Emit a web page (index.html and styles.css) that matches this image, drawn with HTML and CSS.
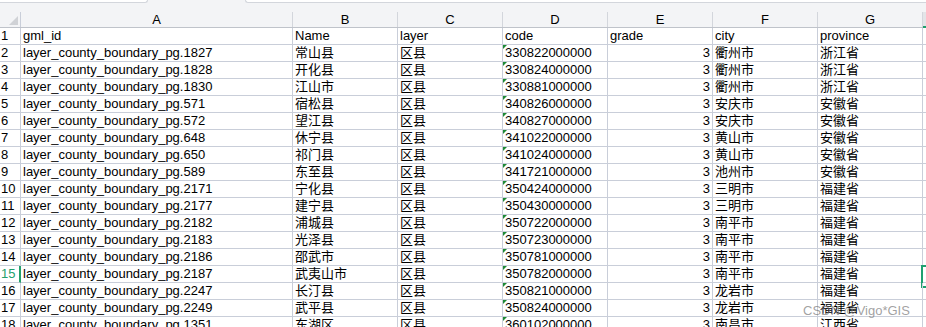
FILE: index.html
```html
<!DOCTYPE html>
<html lang="zh">
<head>
<meta charset="utf-8">
<title>Sheet</title>
<link rel="stylesheet" href="styles.css">
</head>
<body>
<div class="top">
  <div class="namebox"></div>
  <div class="gap"></div>
  <div class="formula"></div>
</div>
<div class="sheet">
  <div class="hc corner"><div class="lbl"><span class="tri-corner"></span></div></div>
  <div class="hc"><div class="lbl">A</div></div>
  <div class="hc"><div class="lbl">B</div></div>
  <div class="hc"><div class="lbl">C</div></div>
  <div class="hc"><div class="lbl">D</div></div>
  <div class="hc"><div class="lbl">E</div></div>
  <div class="hc"><div class="lbl">F</div></div>
  <div class="hc"><div class="lbl">G</div></div>
  <div class="hc hsel"><div class="lbl"></div></div>

  <div class="rh">1</div><div class="c">gml_id</div><div class="c">Name</div><div class="c">layer</div><div class="c">code</div><div class="c">grade</div><div class="c">city</div><div class="c">province</div><div class="c"></div>
  <div class="rh">2</div><div class="c">layer_county_boundary_pg.1827</div><div class="c">常山县</div><div class="c">区县</div><div class="c t">330822000000</div><div class="c n">3</div><div class="c">衢州市</div><div class="c">浙江省</div><div class="c"></div>
  <div class="rh">3</div><div class="c">layer_county_boundary_pg.1828</div><div class="c">开化县</div><div class="c">区县</div><div class="c t">330824000000</div><div class="c n">3</div><div class="c">衢州市</div><div class="c">浙江省</div><div class="c"></div>
  <div class="rh">4</div><div class="c">layer_county_boundary_pg.1830</div><div class="c">江山市</div><div class="c">区县</div><div class="c t">330881000000</div><div class="c n">3</div><div class="c">衢州市</div><div class="c">浙江省</div><div class="c"></div>
  <div class="rh">5</div><div class="c">layer_county_boundary_pg.571</div><div class="c">宿松县</div><div class="c">区县</div><div class="c t">340826000000</div><div class="c n">3</div><div class="c">安庆市</div><div class="c">安徽省</div><div class="c"></div>
  <div class="rh">6</div><div class="c">layer_county_boundary_pg.572</div><div class="c">望江县</div><div class="c">区县</div><div class="c t">340827000000</div><div class="c n">3</div><div class="c">安庆市</div><div class="c">安徽省</div><div class="c"></div>
  <div class="rh">7</div><div class="c">layer_county_boundary_pg.648</div><div class="c">休宁县</div><div class="c">区县</div><div class="c t">341022000000</div><div class="c n">3</div><div class="c">黄山市</div><div class="c">安徽省</div><div class="c"></div>
  <div class="rh">8</div><div class="c">layer_county_boundary_pg.650</div><div class="c">祁门县</div><div class="c">区县</div><div class="c t">341024000000</div><div class="c n">3</div><div class="c">黄山市</div><div class="c">安徽省</div><div class="c"></div>
  <div class="rh">9</div><div class="c">layer_county_boundary_pg.589</div><div class="c">东至县</div><div class="c">区县</div><div class="c t">341721000000</div><div class="c n">3</div><div class="c">池州市</div><div class="c">安徽省</div><div class="c"></div>
  <div class="rh">10</div><div class="c">layer_county_boundary_pg.2171</div><div class="c">宁化县</div><div class="c">区县</div><div class="c t">350424000000</div><div class="c n">3</div><div class="c">三明市</div><div class="c">福建省</div><div class="c"></div>
  <div class="rh">11</div><div class="c">layer_county_boundary_pg.2177</div><div class="c">建宁县</div><div class="c">区县</div><div class="c t">350430000000</div><div class="c n">3</div><div class="c">三明市</div><div class="c">福建省</div><div class="c"></div>
  <div class="rh">12</div><div class="c">layer_county_boundary_pg.2182</div><div class="c">浦城县</div><div class="c">区县</div><div class="c t">350722000000</div><div class="c n">3</div><div class="c">南平市</div><div class="c">福建省</div><div class="c"></div>
  <div class="rh">13</div><div class="c">layer_county_boundary_pg.2183</div><div class="c">光泽县</div><div class="c">区县</div><div class="c t">350723000000</div><div class="c n">3</div><div class="c">南平市</div><div class="c">福建省</div><div class="c"></div>
  <div class="rh">14</div><div class="c">layer_county_boundary_pg.2186</div><div class="c">邵武市</div><div class="c">区县</div><div class="c t">350781000000</div><div class="c n">3</div><div class="c">南平市</div><div class="c">福建省</div><div class="c"></div>
  <div class="rh rsel">15</div><div class="c">layer_county_boundary_pg.2187</div><div class="c">武夷山市</div><div class="c">区县</div><div class="c t">350782000000</div><div class="c n">3</div><div class="c">南平市</div><div class="c">福建省</div><div class="c csel"></div>
  <div class="rh">16</div><div class="c">layer_county_boundary_pg.2247</div><div class="c">长汀县</div><div class="c">区县</div><div class="c t">350821000000</div><div class="c n">3</div><div class="c">龙岩市</div><div class="c">福建省</div><div class="c"></div>
  <div class="rh">17</div><div class="c">layer_county_boundary_pg.2249</div><div class="c">武平县</div><div class="c">区县</div><div class="c t">350824000000</div><div class="c n">3</div><div class="c">龙岩市</div><div class="c">福建省</div><div class="c"></div>
  <div class="rh">18</div><div class="c">layer_county_boundary_pg.1351</div><div class="c">东湖区</div><div class="c">区县</div><div class="c t">360102000000</div><div class="c n">3</div><div class="c">南昌市</div><div class="c">江西省</div><div class="c"></div>
</div>
<div class="watermark">CSDN @Vigo*GIS</div>
</body>
</html>
```
FILE: styles.css
```css
* { box-sizing: border-box; }
html, body {
  margin: 0;
  padding: 0;
  width: 926px;
  height: 327px;
  overflow: hidden;
  background: #ffffff;
  font-family: "Liberation Sans", Arial, "Noto Sans CJK SC", sans-serif;
  font-size: 13px;
  color: #000;
}
.top {
  display: flex;
  height: 3px;
  background: #f3f4f6;
}
.namebox {
  width: 148px;
  background: #fff;
  border-bottom: 1px solid #d3d6dc;
  border-right: 1px solid #d3d6dc;
  border-bottom-right-radius: 3px;
}
.gap { width: 97px; }
.formula {
  flex: 1;
  background: #fff;
  border-bottom: 1px solid #d3d6dc;
  border-left: 1px solid #d3d6dc;
  border-bottom-left-radius: 3px;
}
.sheet {
  display: grid;
  grid-template-columns: 21px 272px 105px 105px 105px 105px 105px 105px 1fr;
  grid-auto-rows: 17px;
}
.hc {
  height: 25px;
  background: #f3f4f6;
  border-bottom: 1px solid #bfc3ca;
}
.hc .lbl {
  margin-top: 9px;
  height: 15px;
  line-height: 15px;
  text-align: center;
  border-right: 1px solid #d3d6dc;
}
.corner .lbl {
  position: relative;
  border-right-color: #c9ced9;
}
.tri-corner {
  position: absolute;
  right: 2px;
  bottom: 2px;
  width: 0;
  height: 0;
  border-left: 9px solid transparent;
  border-bottom: 9px solid #d0d2d6;
}
.hsel {
  background: linear-gradient(#f3f4f6, #f3f4f6) top / 100% 9px no-repeat, #e3e5e8;
  border-bottom: 2px solid #1f9e6e;
}
.hsel .lbl { border-right: none; }
.sheet > .hc:nth-child(-n+9) { grid-row: 1; }
.sheet { grid-template-rows: 25px; }
.rh {
  border-right: 1px solid #c9ced9;
  border-bottom: 1px solid #c9ced9;
  padding-left: 1px;
  line-height: 16px;
  white-space: nowrap;
}
.rsel {
  color: #23a06c;
  border-right: 2px solid #23a06c;
}
.c {
  position: relative;
  border-right: 1px solid #c9ced9;
  border-bottom: 1px solid #c9ced9;
  padding: 0 2px 0 2px;
  line-height: 16px;
  white-space: nowrap;
  overflow: hidden;
}
.c.n { text-align: right; }
.c.t::before {
  content: "";
  position: absolute;
  left: 0;
  top: 0;
  width: 0;
  height: 0;
  border-top: 4px solid #1e8a35;
  border-right: 4px solid transparent;
}
.csel { overflow: visible; }
.csel::after {
  content: "";
  position: absolute;
  left: -2px;
  top: -1px;
  width: 40px;
  height: 19px;
  border: 2px solid #1fa070;
}
.watermark {
  position: absolute;
  left: 803px;
  top: 303px;
  font-size: 13px;
  line-height: 15px;
  color: rgba(120, 120, 120, 0.7);
  white-space: nowrap;
}
```
